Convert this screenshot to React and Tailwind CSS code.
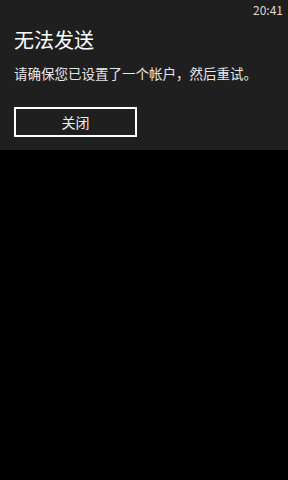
import React from "react";

const font = { fontFamily: '"Segoe UI", "Noto Sans CJK SC", "Open Sans", sans-serif' };

export default function App() {
  return (
    <div className="w-[288px] h-[480px] bg-black text-white overflow-hidden" style={font}>
      <div className="bg-[#1f1f1f] h-[150px] flex flex-col">
        <div className="flex justify-end pr-[5px] pt-[2px] h-[20px] text-[12px] leading-[16px] text-[#d8d8d8]">
          20:41
        </div>
        <div className="pl-[14px] mt-[8px] text-[20px] leading-[24px]">无法发送</div>
        <div className="pl-[14px] mt-[12px] text-[13.5px] leading-[18px] text-[#e8e8e8] whitespace-nowrap">
          请确保您已设置了一个帐户，然后重试。
        </div>
        <button className="ml-[14px] mt-[25px] w-[123px] h-[30px] border-2 border-white flex items-center justify-center text-[14px] text-[#f0f0f0]">
          关闭
        </button>
      </div>
    </div>
  );
}
